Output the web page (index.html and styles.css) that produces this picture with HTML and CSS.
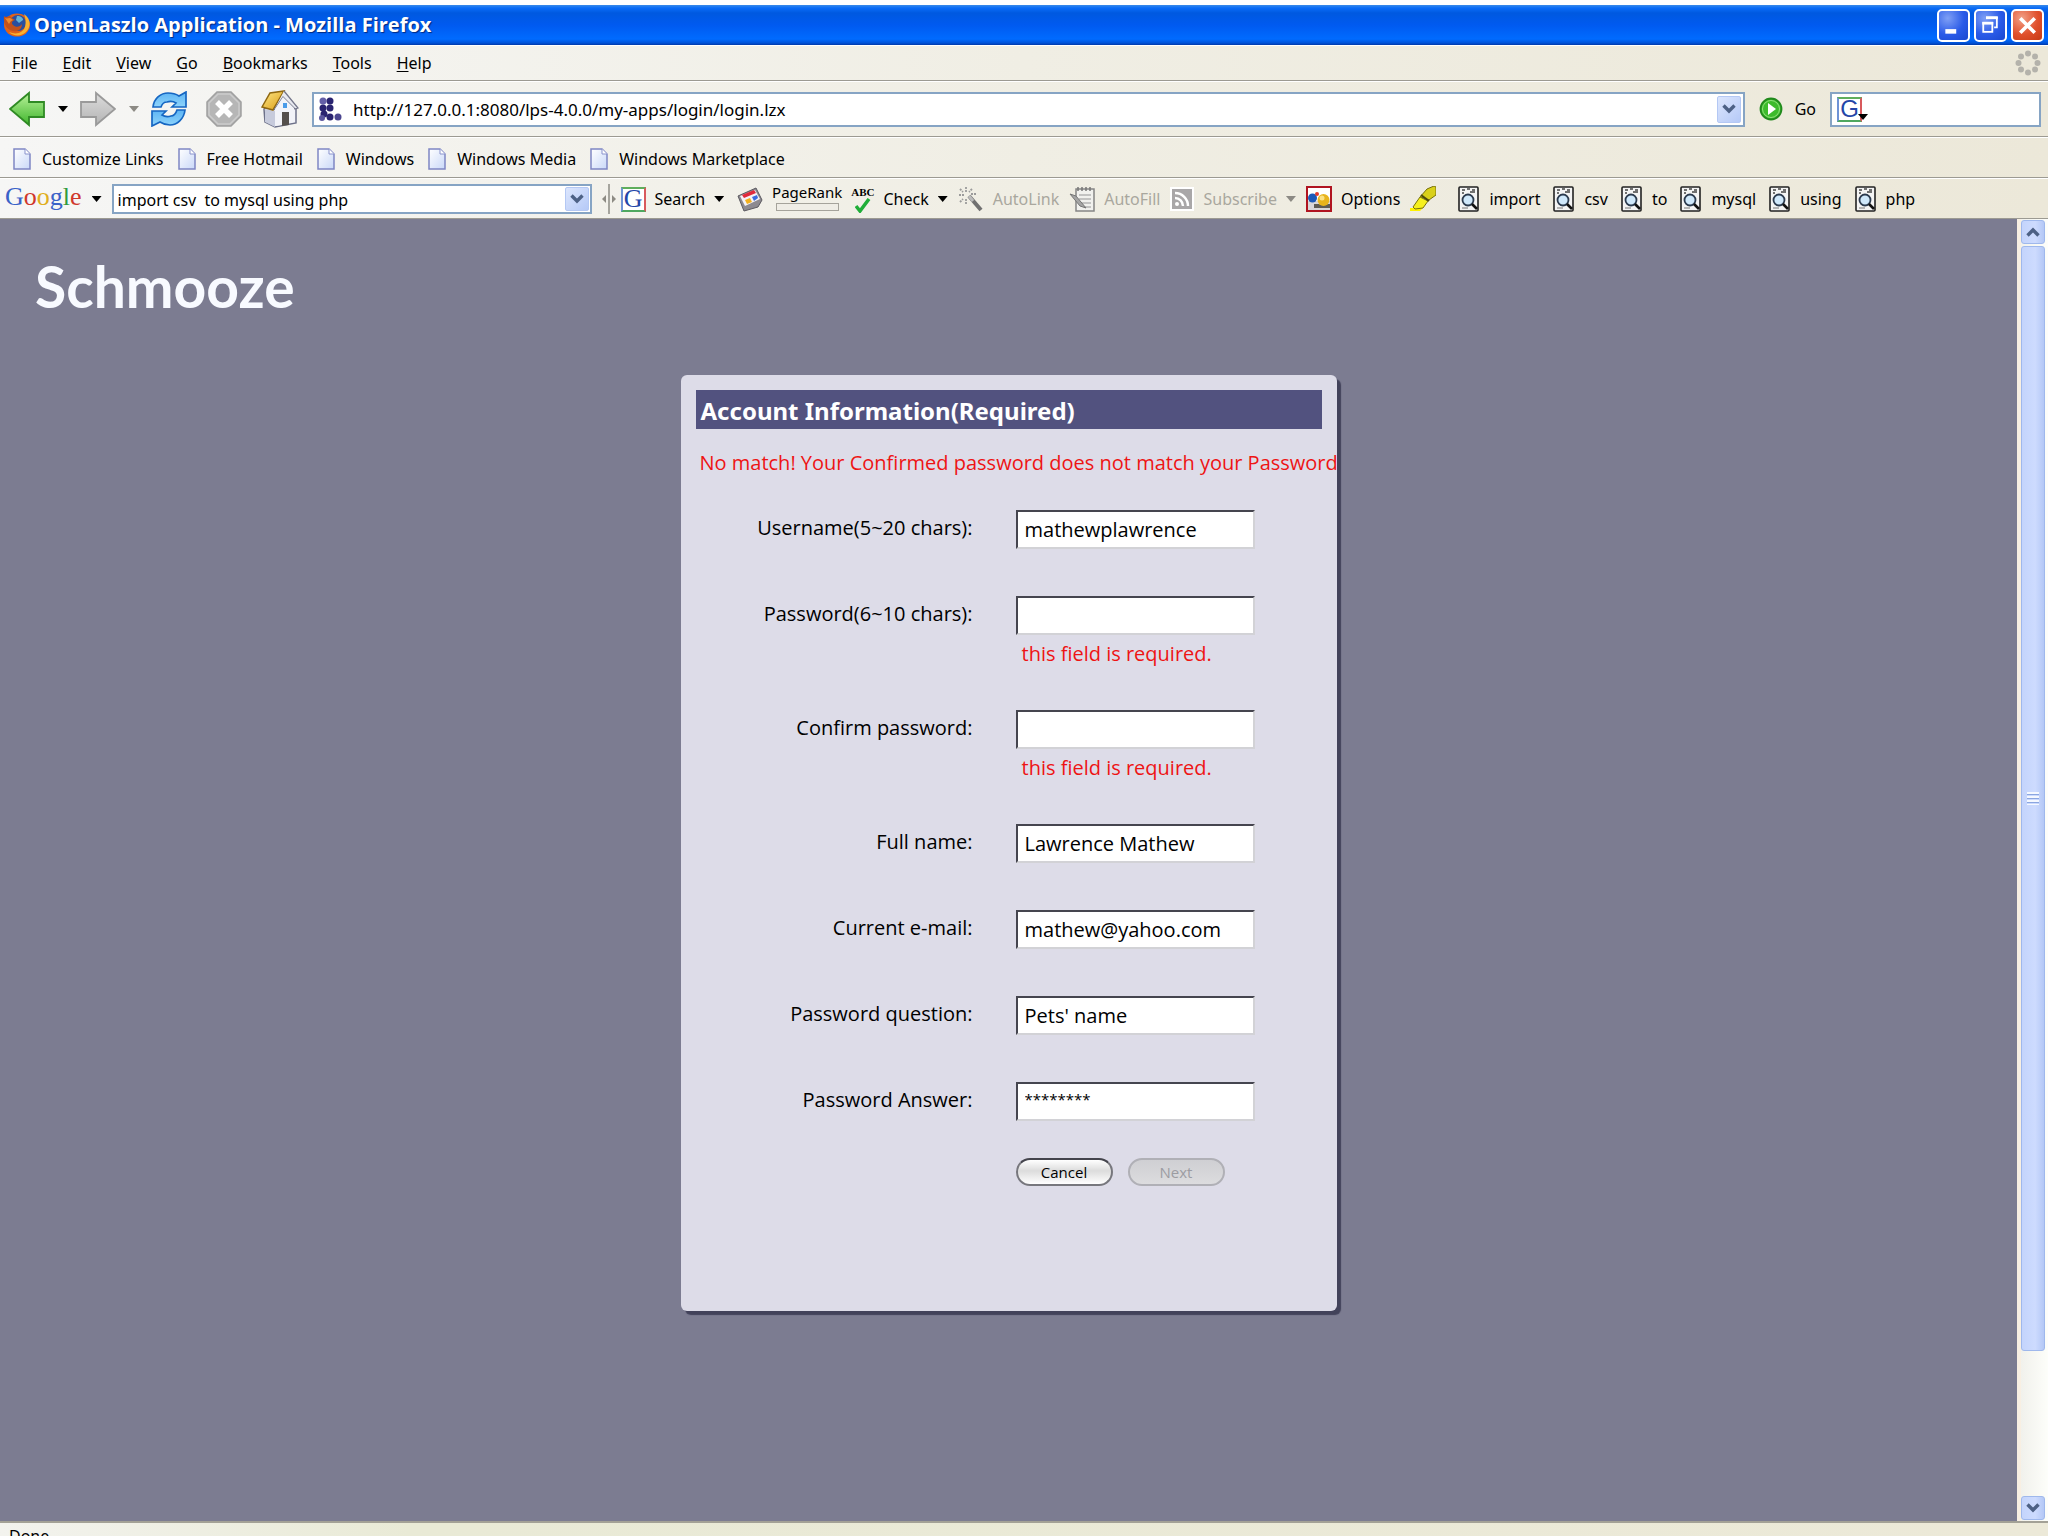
FILE: index.html
```html
<!DOCTYPE html>
<html lang="en">
<head>
<meta charset="utf-8">
<title>OpenLaszlo Application - Mozilla Firefox</title>
<link rel="stylesheet" href="styles.css">
</head>
<body>
<svg class="defs" aria-hidden="true">
  <defs>
    <linearGradient id="paper" x1="0" y1="0" x2="1" y2="1"><stop offset="0" stop-color="#fff"/><stop offset="1" stop-color="#c9d8f8"/></linearGradient>
    <linearGradient id="green" x1="0" y1="0" x2="0" y2="1"><stop offset="0" stop-color="#b9f29a"/><stop offset="1" stop-color="#3fb52c"/></linearGradient>
    <linearGradient id="grey" x1="0" y1="0" x2="0" y2="1"><stop offset="0" stop-color="#dcdcdc"/><stop offset="1" stop-color="#b4b4b4"/></linearGradient>
    <linearGradient id="blue" x1="0" y1="0" x2="0" y2="1"><stop offset="0" stop-color="#5db4f4"/><stop offset="1" stop-color="#8fd4fb"/></linearGradient>
    <linearGradient id="roof" x1="0" y1="0" x2="1" y2="1"><stop offset="0" stop-color="#ffe98a"/><stop offset="1" stop-color="#d99a10"/></linearGradient>
  </defs>
  <symbol id="i-page" viewBox="0 0 18 22"><path d="M1 1h11l5 5v15H1z" fill="url(#paper)" stroke="#7f86c4" stroke-width="1.5"/><path d="M12 1v5h5" fill="#fff" stroke="#8a93cc"/></symbol>
  <symbol id="i-find" viewBox="0 0 22 26"><rect x="1" y="1" width="19" height="24" rx="1" fill="#f4f4f4" stroke="#222" stroke-width="1.6"/><path d="M4 4h3M9 3h3M14 4h3M4 7h2M12 6h5" stroke="#444" stroke-width="1.5"/><circle cx="10" cy="14" r="5.5" fill="#cfe8fb" stroke="#2b3a4e" stroke-width="1.8"/><path d="M14 18l5 5" stroke="#111" stroke-width="2.6"/><path d="M4 22h6" stroke="#777"/></symbol>
  <symbol id="i-chev" viewBox="0 0 14 10"><path d="M1.500 1.500L7 7l5.500-5.500" fill="none" stroke="#4d6185" stroke-width="3.400"/></symbol>
</svg>

<header class="titlebar">
  <svg class="fox" viewBox="0 0 28 24"><ellipse cx="14" cy="12" rx="13" ry="11.500" fill="#e0621a"/><circle cx="15" cy="10" r="8" fill="#2a4f9e"/><path d="M14 3c4 0 6 2 6 4l-4 3-3-3z" fill="#63b3d8"/><path d="M1 3c2 2 4 0 6 0 1 2 4 3 5 4-3 1-4 3-2 5 3 3 7 2 9-1 0 6-5 8-9 7C4 17 0 11 1 3z" fill="#c3521c"/><path d="M21 1c6 4 8 12 2 18-5 5-13 4-17 0 7 3 14 1 16-5 1-4 1-8-1-13z" fill="#f9b230"/><path d="M2 5c2 1 3 0 5 0l3 2c-3 1-3 3-4 4z" fill="#f08a2c"/></svg>
  <h1 class="title">OpenLaszlo Application - Mozilla Firefox</h1>
  <div class="winbtns">
    <button class="winbtn" aria-label="Minimize"><svg viewBox="0 0 32 32"><rect x="7" y="20" width="12" height="5" fill="#fff"/></svg></button>
    <button class="winbtn" aria-label="Restore"><svg viewBox="0 0 32 32"><path d="M12 8V7h11v11h-3" fill="none" stroke="#fff" stroke-width="2"/><path d="M11 7.500h13" stroke="#fff" stroke-width="3"/><rect x="8" y="13" width="10" height="10" fill="none" stroke="#fff" stroke-width="2"/><path d="M7 13.500h12" stroke="#fff" stroke-width="3"/></svg></button>
    <button class="winbtn close" aria-label="Close"><svg viewBox="0 0 32 32"><path d="M8 8l16 16M24 8L8 24" stroke="#fff" stroke-width="4"/></svg></button>
  </div>
</header>

<nav class="menubar">
  <button><u>F</u>ile</button><button><u>E</u>dit</button><button><u>V</u>iew</button><button><u>G</u>o</button><button><u>B</u>ookmarks</button><button><u>T</u>ools</button><button><u>H</u>elp</button>
  <svg class="throbber" viewBox="0 0 26 26" fill="#b4b2ab"><circle cx="13" cy="3.500" r="3"/><circle cx="20" cy="6.500" r="3"/><circle cx="22.500" cy="13" r="3"/><circle cx="20" cy="19.500" r="3"/><circle cx="13" cy="22.500" r="3"/><circle cx="6" cy="19.500" r="3"/><circle cx="3.500" cy="13" r="3"/><circle cx="6" cy="6.500" r="3"/></svg>
</nav>

<div class="navbar">
  <button class="tool" aria-label="Back"><svg class="i36" viewBox="0 0 36 36"><path d="M1 18L20 2v9h15v15H20v8z" fill="url(#green)" stroke="#2f8a24" stroke-width="1.800"/></svg></button>
  <button class="caret" aria-label="Back history"></button>
  <button class="tool" aria-label="Forward" disabled><svg class="i36" viewBox="0 0 36 36"><path d="M35 18L16 2v9H1v15h15v8z" fill="url(#grey)" stroke="#9a9a9a" stroke-width="1.800"/></svg></button>
  <button class="caret dim" aria-label="Forward history" disabled></button>
  <button class="tool reload" aria-label="Reload"><svg class="i36" viewBox="0 0 36 36"><path d="M2 16C3 7 10 2 17 2c4 0 8 1 11 3l7-4v15H21l4-4c-3-2-6-2-9-1-3 0-5 2-6 5z" fill="url(#blue)" stroke="#1666c2" stroke-width="1.700"/><path d="M34 19c-1 9-8 15-15 15-4 0-7-1-10-3l-8 4V20h14l-4 4c3 2 6 2 9 1 3 0 5-3 6-6z" fill="url(#blue)" stroke="#1666c2" stroke-width="1.700"/></svg></button>
  <button class="tool stop" aria-label="Stop" disabled><svg class="i36" viewBox="0 0 36 36"><path d="M11 1h14l10 10v14L25 35H11L1 25V11z" fill="#b6b6b6" stroke="#a0a0a0" stroke-width="1.500"/><path d="M12 3h12l9 9v12l-9 9H12l-9-9V12z" fill="none" stroke="#ccc" stroke-width="1.500"/><path d="M11 11l14 14M25 11L11 25" stroke="#fff" stroke-width="5.500"/></svg></button>
  <button class="tool home" aria-label="Home"><svg class="i38" viewBox="0 0 38 38"><path d="M3 19L22 4l13 13v16L14 37 4 32z" fill="#f2f3f8" stroke="#6d7189" stroke-width="1.500"/><path d="M14 21v16L4 32V19z" fill="#c7cbdc"/><path d="M21 22h7v13l-7 1z" fill="#55504c"/><path d="M22 11h4v5h-4z" fill="#4a9be8" stroke="#bcd"/><path d="M1 17L9 3 23 1 12 20z" fill="url(#roof)" stroke="#8f6710" stroke-width="1.500"/><path d="M23 1l14 17-3 1L22 7 13 20" fill="#e9eaf0" stroke="#74768a" stroke-width="1.300"/><path d="M22 7l11 11v14l-5 1V22h-7v13l-7 1V19z" fill="#f2f3f8"/><path d="M22 13h4v5h-4z" fill="#4a9be8"/></svg></button>
  <div class="combo url">
    <svg class="i24" viewBox="0 0 24 24" fill="#2a2470"><circle cx="5" cy="4" r="3.500" fill="#6460a8"/><circle cx="12" cy="4" r="3.500"/><circle cx="5" cy="11" r="3.500"/><circle cx="12" cy="11" r="3.500"/><circle cx="6" cy="17" r="3.500"/><circle cx="4" cy="21" r="3" fill="#5b569e"/><circle cx="12" cy="20" r="3.500"/><circle cx="20" cy="20" r="3.500" fill="#4a458f"/></svg>
    <input type="text" aria-label="Address" value="http://127.0.0.1:8080/lps-4.0.0/my-apps/login/login.lzx">
    <button class="drop" aria-label="Show history"><svg><use href="#i-chev"/></svg></button>
  </div>
  <button class="tool go"><svg class="i24" viewBox="0 0 24 24"><circle cx="12" cy="12" r="10.500" fill="#3dbb2c" stroke="#218a1c" stroke-width="1.800"/><circle cx="12" cy="12" r="8.500" fill="none" stroke="#8fe27a"/><path d="M9 6l8 6-8 6z" fill="#fff"/></svg>Go</button>
  <div class="combo search">
    <button class="gbox" aria-label="Search engine">G</button>
    <span class="caret eng"></span>
    <input type="text" aria-label="Web search">
  </div>
</div>

<nav class="bookmarks">
  <a href="#"><svg class="page"><use href="#i-page"/></svg>Customize Links</a>
  <a href="#"><svg class="page"><use href="#i-page"/></svg>Free Hotmail</a>
  <a href="#"><svg class="page"><use href="#i-page"/></svg>Windows</a>
  <a href="#"><svg class="page"><use href="#i-page"/></svg>Windows Media</a>
  <a href="#"><svg class="page"><use href="#i-page"/></svg>Windows Marketplace</a>
</nav>

<div class="gbar">
  <button class="logo"><span class="b">G</span><span class="r">o</span><span class="y">o</span><span class="b">g</span><span class="g">l</span><span class="r">e</span></button>
  <button class="caret" aria-label="Google menu"></button>
  <div class="combo query">
    <input type="text" aria-label="Google search" value="import csv  to mysql using php">
    <button class="drop" aria-label="Search history"><svg><use href="#i-chev"/></svg></button>
  </div>
  <div class="group">
    <svg class="split" viewBox="0 0 14 30"><path d="M7 0v30" stroke="#8d8b84" stroke-width="1.500"/><path d="M0 15l4-4v8zM14 15l-4-4v8z" fill="#8d8b84"/></svg>
    <button class="tool"><span class="gbox">G</span>Search<span class="caret"></span></button>
  </div>
  <button class="tool" aria-label="News"><svg class="i26" viewBox="0 0 26 26"><path d="M1 10L19 2l6 12-4 7L7 25z" fill="#8d8a90" stroke="#5c5a60"/><path d="M3 10l15-6 5 9-15 7z" fill="#f4f2f6"/><path d="M5 9l12-5 2 3L7 12z" fill="#e02a3c"/><path d="M8 14l5-2 2 4-5 2z" fill="#f2b01e"/><path d="M15 11l5-2 1 3-4 3z" fill="#3a6be0"/></svg></button>
  <div class="rank"><span>PageRank</span><meter min="0" max="10" value="0" aria-label="PageRank"></meter></div>
  <button class="tool check"><span class="abc"><span>ABC</span><svg viewBox="0 0 16 15"><path d="M1 8l4 5L14 1" fill="none" stroke="#1fae38" stroke-width="3.500"/></svg></span>Check<span class="caret"></span></button>
  <button class="tool off" disabled><svg class="i26" viewBox="0 0 26 26"><path d="M11 10l12 14" stroke="#707070" stroke-width="4"/><path d="M11 10l4 5" stroke="#bbb" stroke-width="3"/><path d="M8 1v5M8 13v5M1 9h5M2 3l3 3M14 3l-3 3M2 16l3-3M13 8h5" stroke="#9b9b9b" stroke-width="1.800" stroke-dasharray="2 1"/></svg>AutoLink</button>
  <button class="tool off" disabled><svg class="i26" viewBox="0 0 26 26"><rect x="7" y="3" width="18" height="22" fill="#f1f1ee" stroke="#858585" stroke-width="1.500"/><path d="M9 1v4M13 1v4M17 1v4M21 1v4" stroke="#777" stroke-width="1.500"/><path d="M10 9h12M10 13h12M12 17h10M15 21h7" stroke="#b4b4b4" stroke-width="1.500"/><path d="M1 8l6 2 10 12-6-2z" fill="#a5a5a5" stroke="#777"/></svg>AutoFill</button>
  <button class="tool off" disabled><svg class="i24" viewBox="0 0 24 24"><rect width="24" height="24" fill="#fff"/><rect x="2" y="2" width="20" height="20" fill="#a9a7a8"/><circle cx="7" cy="17" r="2" fill="#fff"/><path d="M5 11a8 8 0 0 1 8 8M5 6a13 13 0 0 1 13 13" fill="none" stroke="#fff" stroke-width="2.500"/></svg>Subscribe<span class="caret dim"></span></button>
  <button class="tool"><svg class="i26" viewBox="0 0 26 26"><rect x="1" y="1" width="24" height="24" fill="#fff" stroke="#b01420" stroke-width="2"/><path d="M2 15h22v9H2z" fill="#d8d6d8"/><path d="M8 18h16v4H8z" fill="#5f5b52"/><circle cx="6.500" cy="12" r="4.500" fill="#1c59b8"/><circle cx="11" cy="8" r="2" fill="#e23a2a"/><circle cx="17.500" cy="14" r="6" fill="#e8b41c"/><circle cx="16" cy="12" r="2.500" fill="#fbe082"/></svg>Options</button>
  <button class="tool marker" aria-label="Highlight"><svg class="i26" viewBox="0 0 26 26"><path d="M0 22h13l-3 3H0z" fill="#fff200"/><path d="M17 3l7-3 2 1v8l-7 5-5-2-4-1z" fill="#d9d01a" stroke="#77710c"/><path d="M10 11l8 4-5 7-8 1-2-2z" fill="#f6f01e" stroke="#77710c"/><path d="M11 9l8 6" stroke="#4e4a08" stroke-width="2"/></svg></button>
  <div class="words">
    <button class="tool"><svg class="find"><use href="#i-find"/></svg>import</button>
    <button class="tool"><svg class="find"><use href="#i-find"/></svg>csv</button>
    <button class="tool"><svg class="find"><use href="#i-find"/></svg>to</button>
    <button class="tool"><svg class="find"><use href="#i-find"/></svg>mysql</button>
    <button class="tool"><svg class="find"><use href="#i-find"/></svg>using</button>
    <button class="tool"><svg class="find"><use href="#i-find"/></svg>php</button>
  </div>
</div>

<div class="view">
  <main class="app">
    <h2 class="brand">Schmooze</h2>
    <form class="panel">
      <h3 class="heading">Account Information(Required)</h3>
      <p class="alert">No match! Your Confirmed password does not match your Password</p>
      <div class="fields">
        <div class="row"><label for="user">Username(5~20 chars):</label><input id="user" type="text" value="mathewplawrence"></div>
        <div class="row tall"><label for="pass">Password(6~10 chars):</label><input id="pass" type="password"><p class="hint">this field is required.</p></div>
        <div class="row tall"><label for="confirm">Confirm password:</label><input id="confirm" type="password"><p class="hint">this field is required.</p></div>
        <div class="row"><label for="name">Full name:</label><input id="name" type="text" value="Lawrence Mathew"></div>
        <div class="row"><label for="mail">Current e-mail:</label><input id="mail" type="text" value="mathew@yahoo.com"></div>
        <div class="row"><label for="question">Password question:</label><input id="question" type="text" value="Pets' name"></div>
        <div class="row"><label for="answer">Password Answer:</label><input id="answer" class="masked" type="text" value="********"></div>
      </div>
      <div class="actions"><button type="button" class="pill">Cancel</button><button type="button" class="pill" disabled>Next</button></div>
    </form>
  </main>
  <div class="scrollbar">
    <button class="sb up" aria-label="Scroll up"><svg><use href="#i-chev"/></svg></button>
    <div class="track"><div class="thumb"><span class="grip"></span></div></div>
    <button class="sb" aria-label="Scroll down"><svg><use href="#i-chev"/></svg></button>
  </div>
</div>
<footer class="status">Done</footer>
</body>
</html>
```
FILE: styles.css
```css
* { box-sizing: border-box; }
body {
  margin: 0;
  height: 100vh;
  padding-top: 5px;
  display: flex;
  flex-direction: column;
  overflow: hidden;
  background: #fff;
  color: #000;
  font: 16px/24px "Noto Sans", sans-serif;
}
h1, h2, h3, p { margin: 0; }
button, input { font: inherit; color: inherit; margin: 0; padding: 0; border: 0; background: none; }
input { outline: 0; min-width: 0; }
svg { display: block; flex: none; }
.defs { position: absolute; width: 0; height: 0; }

/* title bar */
.titlebar {
  flex: none;
  height: 40px;
  padding: 0 4px 0 3px;
  display: flex;
  align-items: center;
  background: linear-gradient(#3a8ae8 0, #0a6cf8 3px, #0059e0 8px, #005af0 20px, #006bff 34px, #0052d8 38px, #0038a8 40px);
}
.fox { width: 28px; height: 24px; margin-right: 3px; }
.title { flex: 1; color: #fff; font: bold 20px/28px "Open Sans", sans-serif; text-shadow: 1px 1px 1px #012a80; }
.winbtns { display: flex; gap: 4px; }
.winbtn {
  width: 33px;
  height: 33px;
  border: 2px solid #fff;
  border-radius: 5px;
  background: radial-gradient(circle at 30% 25%, #7f9ff5, #2a5be8 55%, #1a48d0);
}
.winbtn.close { background: radial-gradient(circle at 30% 25%, #f2a086, #e0502c 55%, #c63a14); }

/* toolbars */
.menubar, .navbar, .bookmarks, .gbar {
  flex: none;
  display: flex;
  align-items: center;
  background: linear-gradient(90deg, #f6f6f5, #f0eee4 50%, #ece8d9);
  border-bottom: 1px solid #9c9a92;
  border-top: 1px solid #fff;
}
.menubar { height: 36px; padding: 0 7px 0 12px; gap: 25px; }
.throbber { width: 26px; height: 26px; margin-left: auto; }
u { text-underline-offset: 2px; }

.navbar { height: 56px; padding: 0 7px 0 9px; }
.tool { display: flex; align-items: center; gap: 9px; white-space: nowrap; }
.caret { flex: none; width: 10px; height: 6px; background: #000; clip-path: polygon(0 0, 100% 0, 50% 100%); }
.caret.dim { background: #8c8a84; }
.i36 { width: 36px; height: 36px; }
.i38 { width: 38px; height: 38px; }
.i24 { width: 24px; height: 24px; }
.i26 { width: 26px; height: 26px; }
.navbar > .caret { margin: 0 12px 0 13px; }
.stop { margin: 0 19px; }
.combo { display: flex; align-items: center; background: #fff; border: 2px solid #86a4c4; }
.combo input { flex: 1; padding-top: 2px; }
.url { flex: 1; height: 35px; margin: 0 14px 0 13px; padding: 0 2px 0 4px; gap: 11px; font-size: 17px; }
.drop {
  width: 24px;
  height: 27px;
  display: grid;
  place-items: center;
  border: 1px solid #b4c8f4;
  border-radius: 2px;
  background: linear-gradient(135deg, #dce6fd, #b5c9f7);
}
.drop svg, .sb svg { width: 14px; height: 10px; }
.go { gap: 12px; }
.search { width: 211px; height: 35px; margin-left: 14px; padding-left: 5px; }
.gbox {
  width: 25px;
  height: 25px;
  border: 2px solid;
  border-color: #5fae5c #d8595c #4fa860 #6f93d6;
  background: #fff;
  color: #2446a8;
  font: 24px/20px "Liberation Sans", sans-serif;
  text-align: center;
}
.eng { margin: 16px 0 0 -4px; z-index: 1; }

.bookmarks { height: 41px; padding: 2px 0 0 13px; gap: 14px; }
.bookmarks a { display: flex; align-items: center; gap: 11px; color: inherit; text-decoration: none; }
.page { width: 18px; height: 22px; }

.gbar { height: 41px; padding: 1px 0 0 5px; gap: 10px; }
.logo { font: 26px/28px "Liberation Serif", serif; padding-bottom: 5px; }
.logo .b { color: #3a62c8; }
.logo .r { color: #d0382c; }
.logo .y { color: #e0ae20; }
.logo .g { color: #2f9a3c; }
.query { width: 480px; height: 30px; padding: 0 1px 0 4px; }
.query input { white-space: pre; }
.query .drop { height: 24px; }
.group { display: flex; align-items: center; gap: 5px; margin-right: 3px; }
.split { width: 14px; height: 30px; }
.gbar .gbox { font: 26px/20px "Liberation Serif", serif; }
.rank { display: flex; flex-direction: column; gap: 3px; padding-bottom: 4px; font-size: 15px; line-height: 16px; width: 68px; align-items: center; }
meter { -webkit-appearance: none; appearance: none; width: 63px; height: 8px; border: 1px solid #a5a39b; background: #efede6; }
meter::-webkit-meter-bar { display: none; }
.abc { display: flex; flex-direction: column; align-items: center; font: bold 11px/12px "Liberation Serif", serif; }
.abc svg { width: 16px; height: 15px; }
.off { color: #a9a79e; }
.find { width: 22px; height: 26px; }
.words { display: flex; gap: 13px; margin-left: 12px; }

/* page */
.view { flex: 1; min-height: 0; display: flex; }
.app { flex: 1; background: #7c7c91; display: flex; flex-direction: column; font: 20px/28px "Open Sans", sans-serif; }
.brand { padding: 31px 0 0 35px; color: #f8faff; font: bold 57px/72px "Lato", sans-serif; }
.panel {
  width: 656px;
  height: 936px;
  margin: 53px auto 0;
  padding: 15px;
  border-radius: 6px;
  background: #dddce8;
  box-shadow: 4px 4px 1px #42425a;
}
.heading { height: 39px; padding-left: 5px; background: #52527f; color: #fff; font: bold 24px/41px "Noto Sans", sans-serif; }
.alert { padding: 20px 0 0 4px; color: #ee1414; white-space: nowrap; }
.fields { padding-top: 33px; }
.row { display: grid; grid-template-columns: 277px 239px; column-gap: 43px; min-height: 86px; align-content: start; }
.row.tall { min-height: 114px; }
.row label { text-align: right; line-height: 36px; }
.row input {
  height: 39px;
  padding: 0 7px;
  border: 2px solid;
  border-color: #45454f #d2d2d6 #d2d2d6 #45454f;
  background: #fff;
}
.row .masked { font-size: 15px; padding-bottom: 6px; }
.hint { grid-column: 2; padding: 5px 0 0 6px; color: #ee1414; }
.actions { display: flex; gap: 15px; padding-left: 320px; margin-top: -10px; }
.pill {
  width: 97px;
  height: 28px;
  border: 2px solid #77777d;
  border-top-color: #44444c;
  border-radius: 14px;
  background: linear-gradient(#fff, #dcdcdc 45%, #fff);
  font-size: 15px;
  line-height: 24px;
}
.pill:disabled { border-color: #b0b0b6; background: linear-gradient(#cfcfd3, #dcdcde); color: #9c9ca2; }

/* scroll bar */
.scrollbar { width: 31px; padding: 1px 3px 1px 0; display: flex; flex-direction: column; gap: 2px; align-items: center; border-left: 4px solid #f8efe2; background: linear-gradient(90deg, #f1f1ec, #fdfefa); }
.sb, .thumb { width: 24px; border: 1px solid #9fb8ec; border-radius: 3px; background: linear-gradient(90deg, #c4d4fc, #cddbfe 60%, #b4c8f6); }
.sb { height: 24px; flex: none; display: grid; place-items: center; }
.up svg { transform: scaleY(-1); }
.track { flex: 1; }
.thumb { height: calc(100% - 143px); display: grid; place-items: center; }
.grip { width: 12px; height: 13px; background: repeating-linear-gradient(#f4f8ff 0 2px, #8ba6e0 2px 3px, transparent 3px 4px); }
.status { flex: none; height: 15px; padding: 1px 0 0 9px; overflow: hidden; border-top: 2px solid #a3a196; background: linear-gradient(90deg, #f3f3ee, #e9ead6 20%, #ece9d8); }
```
